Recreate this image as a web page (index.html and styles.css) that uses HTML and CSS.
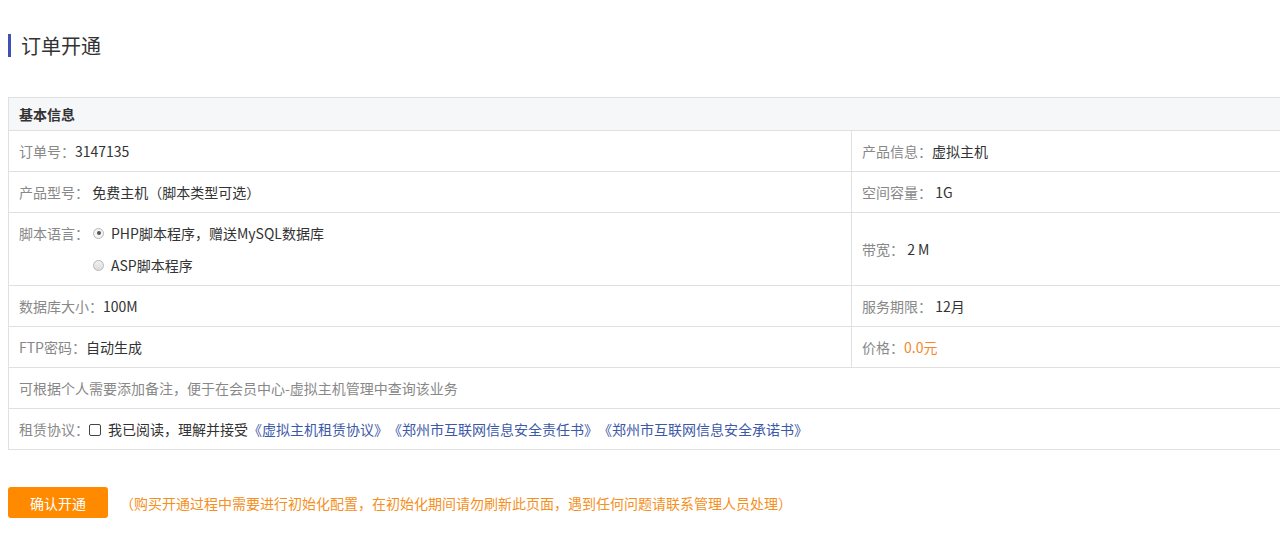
FILE: index.html
```html
<!DOCTYPE html>
<html lang="zh-CN">
<head>
<meta charset="utf-8">
<title>订单开通</title>
<link rel="stylesheet" href="styles.css">
</head>
<body>
<div class="page">
  <h1 class="title">订单开通</h1>
  <div class="table-wrap">
    <table class="info">
      <colgroup>
        <col class="col-left">
        <col class="col-right">
      </colgroup>
      <tr class="head"><th colspan="2">基本信息</th></tr>
      <tr>
        <td><span class="lbl">订单号：</span><span class="val">3147135</span></td>
        <td><span class="lbl">产品信息：</span><span class="val">虚拟主机</span></td>
      </tr>
      <tr>
        <td><span class="lbl">产品型号：</span> <span class="val">免费主机（脚本类型可选）</span></td>
        <td><span class="lbl">空间容量：</span> <span class="val">1G</span></td>
      </tr>
      <tr class="tall">
        <td>
          <div class="lang">
            <span class="lbl">脚本语言：</span>
            <div class="opts">
              <label class="opt"><span class="radio checked"></span><span class="val">PHP脚本程序，赠送MySQL数据库</span></label>
              <label class="opt"><span class="radio"></span><span class="val">ASP脚本程序</span></label>
            </div>
          </div>
        </td>
        <td><span class="lbl">带宽：</span> <span class="val">2 M</span></td>
      </tr>
      <tr>
        <td><span class="lbl">数据库大小：</span><span class="val">100M</span></td>
        <td><span class="lbl">服务期限：</span> <span class="val">12月</span></td>
      </tr>
      <tr>
        <td><span class="lbl">FTP密码：</span><span class="val">自动生成</span></td>
        <td><span class="lbl">价格：</span><span class="price">0.0元</span></td>
      </tr>
      <tr>
        <td colspan="2"><span class="lbl">可根据个人需要添加备注，便于在会员中心-虚拟主机管理中查询该业务</span></td>
      </tr>
      <tr>
        <td colspan="2"><span class="lbl">租赁协议：</span><span class="checkbox"></span><span class="val">我已阅读，理解并接受</span><a class="link">《虚拟主机租赁协议》</a><a class="link spaced">《郑州市互联网信息安全责任书》</a><a class="link spaced">《郑州市互联网信息安全承诺书》</a></td>
      </tr>
    </table>
  </div>
  <div class="actions">
    <button class="btn">确认开通</button>
    <span class="notice">（购买开通过程中需要进行初始化配置，在初始化期间请勿刷新此页面，遇到任何问题请联系管理人员处理）</span>
  </div>
</div>
</body>
</html>
```
FILE: styles.css
```css
html, body {
  margin: 0;
  padding: 0;
  background: #fff;
  overflow: hidden;
}
body {
  font-family: "Noto Sans CJK SC", "Microsoft YaHei", sans-serif;
  font-size: 14px;
  color: #333;
}
.page {
  padding: 34px 0 0 8px;
}
.title {
  margin: 0;
  border-left: 3px solid #3f51b5;
  padding-left: 10px;
  font-size: 20px;
  font-weight: normal;
  line-height: 23px;
  color: #333;
}
.table-wrap {
  margin-top: 40px;
  width: 1290px;
}
.info {
  width: 1290px;
  border-collapse: collapse;
  table-layout: fixed;
}
.col-left {
  width: 843px;
}
.info th, .info td {
  border: 1px solid #e0e0e0;
  padding: 0 10px;
  text-align: left;
  vertical-align: middle;
  line-height: 20px;
  white-space: nowrap;
}
.info th {
  background: #f6f7f9;
  height: 32px;
  font-weight: bold;
  color: #333;
}
.info td {
  height: 40px;
}
.info tr.tall td {
  height: 72px;
}
.lbl {
  color: #888;
}
.val {
  color: #333;
}
.price {
  color: #f28a2c;
}
.lang {
  display: flex;
  align-items: flex-start;
}
.opts {
  display: flex;
  flex-direction: column;
  gap: 12px;
  margin-left: 4px;
}
.opt {
  display: flex;
  align-items: center;
  gap: 7px;
}
.radio {
  width: 11px;
  height: 11px;
  border: 1px solid #b8b8b8;
  border-radius: 50%;
  background: linear-gradient(#f2f2f2, #dcdcdc);
  box-sizing: border-box;
  position: relative;
}
.radio.checked {
  background: #f4f4f4;
}
.radio.checked::after {
  content: "";
  position: absolute;
  left: 2.5px;
  top: 2.5px;
  width: 4px;
  height: 4px;
  border-radius: 50%;
  background: #555;
}
.checkbox {
  display: inline-block;
  width: 12px;
  height: 12px;
  box-sizing: border-box;
  border: 1px solid #444;
  border-radius: 2px;
  vertical-align: -1px;
  margin: 0 7px 0 0;
}
.link {
  color: #3b59a8;
  text-decoration: none;
}
.link.spaced {
  margin-left: 7px;
}
.actions {
  margin-top: 37px;
  display: flex;
  align-items: center;
  gap: 12px;
}
.btn {
  width: 100px;
  height: 31px;
  background: #ff8a00;
  border: none;
  border-radius: 3px;
  color: #fff;
  font-family: inherit;
  font-size: 14px;
  padding: 0;
}
.notice {
  color: #f5901e;
}
```
